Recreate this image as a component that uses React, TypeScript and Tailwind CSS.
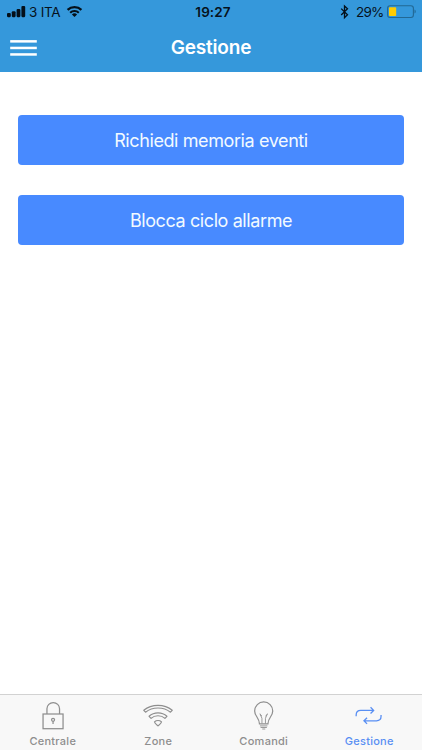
import React from "react";

function StatusBar() {
  return (
    <div className="flex h-6 items-start text-[13.5px] leading-6 text-[#06121c]">
      <div className="flex w-[140px] items-start pl-[7px]">
        <svg className="h-6 w-[19px]" viewBox="7 0 19 24" fill="#04101a">
          <rect x="7" y="13" width="3.8" height="4.2" rx="1.1" />
          <rect x="11.8" y="11.2" width="3.8" height="6" rx="1.1" />
          <rect x="16.6" y="9" width="3.8" height="8.2" rx="1.1" />
          <rect x="21.4" y="6" width="3.8" height="11.2" rx="1.1" />
        </svg>
        <span className="ml-[3px] w-[37px] whitespace-nowrap tracking-[-0.25px]">3 ITA</span>
        <svg className="h-6 w-[18px]" viewBox="66 0 18 24" fill="none" stroke="#04101a">
          <path d="M67.6 9.8a10.1 10.1 0 0 1 13.8 0" strokeWidth="2.3" />
          <path d="M70.2 12.7a6.2 6.2 0 0 1 8.6 0" strokeWidth="2.1" />
          <path d="M71.9 14.5a3.9 3.9 0 0 1 5.2 0L74.5 17z" fill="#04101a" stroke="none" />
        </svg>
      </div>
      <div className="flex-1 pl-1 text-center text-[13.5px] font-semibold tracking-[0.1px]">19:27</div>
      <div className="flex w-[140px] items-start pl-[58px]">
        <svg className="h-6 w-[10px]" viewBox="340 0 10 24" fill="none" stroke="#04101a" strokeWidth="1.3">
          <path d="M341.2 8.6l6.3 6.1-3 2.9V6l3 2.8-6.3 6.2" />
        </svg>
        <span className="ml-[6px] w-[30px] whitespace-nowrap tracking-[-0.75px]">29%</span>
        <svg className="h-6 w-[31px]" viewBox="386 0 31 24" fill="none">
          <rect x="387.6" y="5.7" width="25.8" height="11.8" rx="2.5" stroke="#226894" strokeWidth="1.1" />
          <rect x="389" y="7.3" width="7.2" height="8.7" rx="0.8" fill="#fc0" />
          <path d="M414.5 9.6c1.7.8 1.7 3.2 0 4z" fill="#226894" />
        </svg>
      </div>
    </div>
  );
}

function Header() {
  return (
    <header className="h-[72px] bg-[#3598db]">
      <StatusBar />
      <div className="flex h-12 items-center">
        <button aria-label="Menu" className="w-[100px] pl-[10px]">
          <svg className="h-4 w-[27px]" viewBox="0 0 27 16" fill="#fff">
            <rect x="0.2" y="0.1" width="26.600" height="2.5" />
            <rect x="0.2" y="6.700" width="26.600" height="2.5" />
            <rect x="0.2" y="13.200" width="26.600" height="2.5" />
          </svg>
        </button>
        <h1 className="flex-1 text-center text-[19px] font-semibold leading-6 tracking-[-0.2px] text-white">Gestione</h1>
        <div className="w-[100px]" />
      </div>
    </header>
  );
}

function Tab({ label, active, children }: { label: string; active?: boolean; children: React.ReactNode }) {
  return (
    <button className={`flex flex-1 flex-col items-center pt-1 ${active ? "text-[#598ff3]" : "text-[#8e8e8e]"}`}>
      {children}
      <span className="mt-[3px] text-[11px] font-medium leading-[14px] tracking-[0.27px]">{label}</span>
    </button>
  );
}

const icon = "h-8 w-9 fill-none stroke-current";

export default function App() {
  return (
    <div className="flex h-[750px] w-[422px] flex-col overflow-hidden bg-white font-['Inter','Liberation_Sans',sans-serif]">
      <Header />
      <main className="flex flex-1 flex-col gap-[29.5px] px-[18px] pt-[43px]">
        <button className="h-[50px] rounded-[4px] bg-[#488aff] pt-px text-[18px] tracking-[-0.4px] text-[#f2faff]">Richiedi memoria eventi</button>
        <button className="h-[50.5px] rounded-[4px] bg-[#488aff] pt-px text-[18px] tracking-[-0.4px] text-[#f2faff]">Blocca ciclo allarme</button>
      </main>
      <nav className="flex h-14 border-t border-[#d2d2d2] bg-[#f8f8f8]">
        <Tab label="Centrale">
          <svg className={icon} viewBox="34.75 699 36 32" strokeWidth="1.25">
            <rect x="42.8" y="714" width="20" height="14.7" />
            <path d="M46.7 714v-5.2a6.3 6.3 0 0 1 12.6 0v5.2" />
            <circle cx="52.8" cy="719.8" r="1.5" />
            <path d="M52.8 721.3v2.7" />
          </svg>
        </Tab>
        <Tab label="Zone">
          <svg className={icon} viewBox="140.25 699 36 32" strokeWidth="1.15" strokeLinejoin="round">
            <path d="M144 710.3C152 703.7 164.500 703.7 172.500 710.3L170.700 712.2C163.800 706.6 152.700 706.6 145.800 712.2z" />
            <path d="M149.300 716.3C154.300 711.8 162.200 711.8 167.200 716.3L165.200 718.400C161.500 714.900 155 714.900 151.300 718.400z" />
            <path d="M154.700 721.9C156.700 720.200 159.800 720.200 161.800 721.9C161.500 723.400 159.500 724.900 158.250 725.9C157 724.900 155 723.400 154.700 721.9z" />
          </svg>
        </Tab>
        <Tab label="Comandi">
          <svg className={icon} viewBox="245.75 699 36 32" strokeWidth="1.2">
            <path d="M259.200 723.800C259.200 718 254.400 716.200 254.400 711A9.050 9.050 0 0 1 272.500 711C272.500 716.200 267.700 718 267.700 723.800z" />
            <path d="M261.700 723.500v-5.200l-2-4.700M265.200 723.500v-5.200l2-4.700M259.700 714.500l2 1.500M267.200 714.500l-2 1.500M259.700 725.900h7.500M260.300 727.500h6.300M262 729h3" strokeWidth="0.9" />
          </svg>
        </Tab>
        <Tab label="Gestione" active>
          <svg className={icon} viewBox="351.25 699 36 32" strokeWidth="1.3">
            <path d="M356.400 716.300v-1.300q0-4.600 4.600-4.600h12.800M370.800 707.300l3.100 3.100-3.100 3.100" />
            <path d="M381.300 715v1.300q0 4.500-4.600 4.500h-12.500M367.300 717.700l-3.100 3.100 3.100 3.100" />
          </svg>
        </Tab>
      </nav>
    </div>
  );
}
